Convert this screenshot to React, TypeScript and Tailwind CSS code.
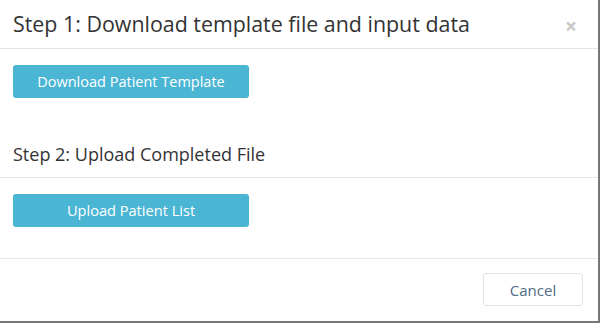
import React from "react";

const App: React.FC = () => {
  return (
    <div
      className="w-[600px] h-[323px] bg-[#777777] overflow-hidden"
      style={{ fontFamily: '"Open Sans", "Noto Sans", sans-serif' }}
    >
      <div className="w-[598px] h-[321px] bg-white flex flex-col">
        <div className="h-[49px] flex items-center justify-between pl-[13px] pr-[21px] border-b border-[#e5e5e5]">
          <h4 className="text-[21.4px] text-[#333333] leading-none">
            Step 1: Download template file and input data
          </h4>
          <button className="text-[#c8c8c8] text-[21px] font-bold leading-none mt-[5px]">
            ×
          </button>
        </div>

        <div className="px-[13px] pt-[16px]">
          <button className="w-[236px] h-[33px] rounded-[3px] bg-[#4bb5d4] text-white text-[14.5px]">
            Download Patient Template
          </button>
        </div>

        <div className="h-[80px] flex items-end border-b border-[#e5e9ee] px-[13px] pb-[14px]">
          <h4 className="text-[18px] text-[#333333] leading-none">
            Step 2: Upload Completed File
          </h4>
        </div>

        <div className="px-[13px] pt-[16px] h-[81px] border-b border-[#e5e9ee]">
          <button className="w-[236px] h-[33px] rounded-[3px] bg-[#4bb5d4] text-white text-[14.6px]">
            Upload Patient List
          </button>
        </div>

        <div className="flex justify-end pr-[15px] pt-[14px]">
          <button className="w-[100px] h-[33px] rounded-[3px] border border-[#dfe3e8] bg-white text-[#4f6b85] text-[15px] pt-[2px]">
            Cancel
          </button>
        </div>
      </div>
    </div>
  );
};

export default App;
